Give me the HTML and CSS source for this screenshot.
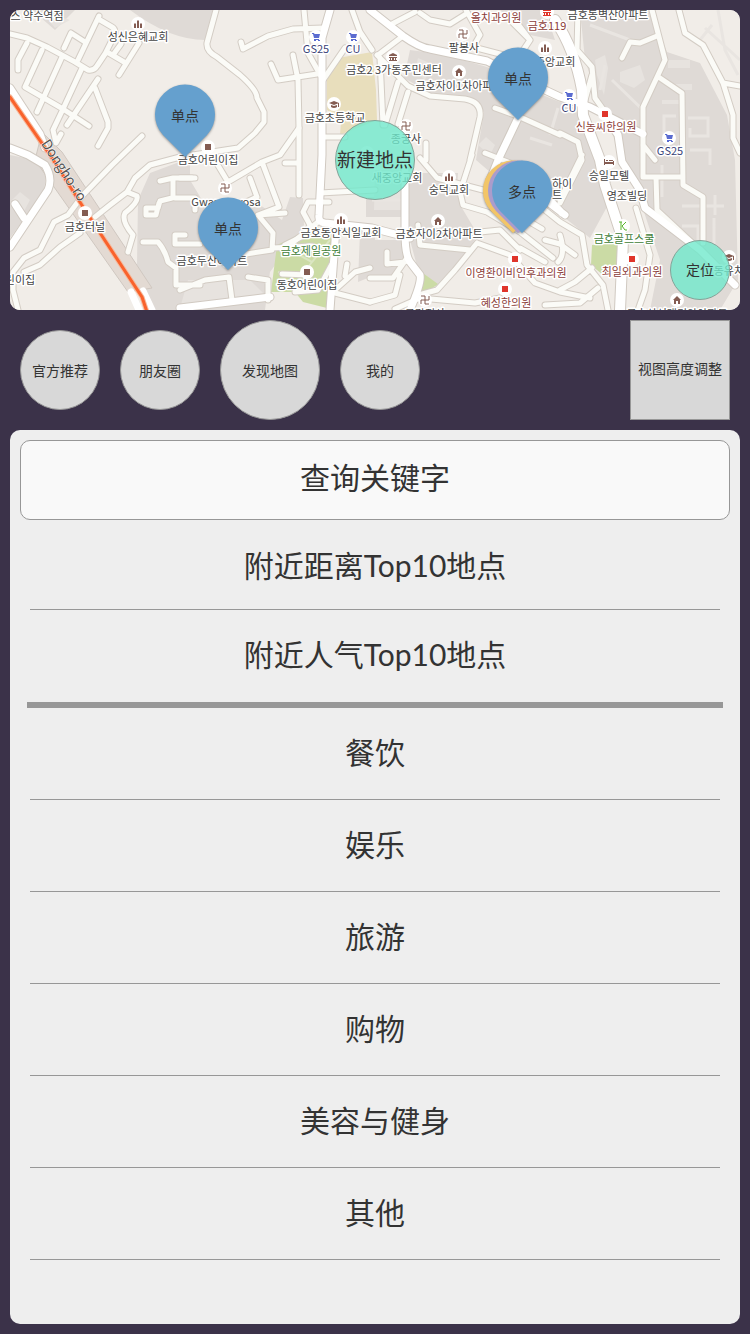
FILE: index.html
```html
<!DOCTYPE html>
<html lang="zh-CN">
<head>
<meta charset="utf-8">
<meta name="viewport" content="width=device-width, initial-scale=1">
<title>发现地图</title>
<link rel="stylesheet" href="styles.css">
</head>
<body>
<main class="app">
  <section class="map" aria-label="地图">
    <svg class="map-art" viewBox="10 10 730 300" preserveAspectRatio="xMidYMid slice">
      <defs>
        <g id="lanes">
          <path d="M10 34L27 38 47 47 75 62 88 70Q94 71 97 66L105 54 113 38Q117 30 112 27L100 20M99 16L78 60M85 42L71 33 64 48M27 43L18 60V70M42 50L25 87 63 109 89 126M62 57L37 112M82 68L63 109 53 130 56 143 61 134M98 79L67 125M95 88L108 122V128L98 146M107 52L124 62M139 43L119 75M121 44L113 55"/>
          <path d="M142 136L112 165 83 195 68 215 54 222 40 250 24 258 13 272V290L18 310M80 233L60 247 40 265 24 272M95 217L110 205 127 192 135 178 150 165 180 157 225 150 238 148 255 133 264 122V112L257 98Q257 90 240 75L217 57Q206 51 207 43L216 10M127 192L137 196Q139 202 125 213 121 221 133 235L128 252"/>
          <path d="M160 181L173 178H195M173 180V195M172 198L160 201 158 208H146V215L156 215 159 203M175 198H195V210M143 242H158Q165 250 168 262L176 268V285H200M175 235V244H200M185 235H175M180 290L205 280 229 277 232 300M248 277L268 280V300M216 162L228 182 240 175 262 162 280 155 299 128 298 80 293 55M271 64L278 80 317 74M304 10L308 53 322 78M241 42L243 49 268 36 293 29 323 28M345 48L323 80M352 10L360 32 372 50M322 137H345M262 162L279 207 258 215 273 233 272 250 240 255 220 252M258 215L285 213M287 247L318 222M273 248L312 246"/>
          <path d="M180 178H192M250 178L257 197 240 205M299 128V195M285 163H299M329 202H308L303 212 310 225 305 235 285 245M320 193L375 190M282 274L310 275M335 290L355 272 370 268M335 293L370 302M345 276L347 264M295 292L318 290 333 262"/>
          <path d="M403 36L378 55M390 25L415 12M420 13L430 20 450 24 466 14M377 55L408 86 430 96 465 99Q482 102 480 117L470 160M398 82L385 125M408 92L398 124M380 58L383 125M495 108L520 117 560 135M485 153L510 163M466 10L480 35 473 47 515 58M505 15L530 40 520 55M515 20L530 40M426 143L426 160M420 158L437 178 483 190M472 155L460 192 463 205 487 212 520 232 553 258M418 225L420 245 470 250M470 233L500 230 520 250M477 243L455 270 437 290 415 296M477 243L510 255 535 283 560 292 590 298M370 278H393L407 258M387 252V264L405 262M370 302L395 295 400 275M520 248L545 262M530 222L542 229M545 240L560 244 575 255"/>
          <path d="M578 10L577 50 592 67 595 98 605 112M592 75L585 100M652 10L665 60 643 107V177H683M656 177L657 210 700 250M660 78L682 93 683 185 703 197V243M657 36L640 43 630 42 622 58M643 145L655 160M679 10L685 33 703 45 723 83 733 115V138L740 153M723 83L740 86M636 208L650 255 645 290 638 310M582 155L560 200M545 210L560 222 582 235 587 265 603 285 608 310M560 290L575 282 592 268M545 305L580 303 598 288M560 133L578 142 582 160 560 203M560 235Q566 255 558 262M395 309L420 298 475 303 500 298"/>
        </g>
        <g id="streets">
          <path d="M10 148L28 155 45 165Q53 178 48 190L10 247M15 204L24 218M10 88L40 134 45 148M330 10L322 38V155L319 215Q318 222 325 223L372 228 410 238M336 228L330 310M370 10L403 36Q420 48 430 49L487 61 530 83 560 97 590 107 643 134M518 118L498 160 490 180M405 165V232Q405 255 410 262L420 275Q422 282 410 310M180 308L270 297M519 180L565 215M605 115L618 135 622 162 640 190 645 208 700 250 735 285M540 190L562 213"/>
        </g>
        <path id="avenue" d="M555 20Q575 50 582 90L583 115 600 160 605 185 623 240 620 310"/>
        <g id="church"><circle r="7"/><path class="brown" d="M-4 4V0L-3-1-2 0V4ZM-1 4V-3L0-4 1-3V4ZM2 4V0L3-1 4 0V4Z"/></g>
        <g id="place"><circle r="7"/><path class="brown" d="M-3-3H3V3H-3Z"/></g>
        <g id="clinic"><circle r="7"/><path class="red" d="M-3-3H3V3H-3Z"/></g>
        <g id="cart"><circle r="7"/><path class="blue" d="M-4-4H-2L-1.500-3H4L3 1H-2L-3-3H-4ZM-2 2H3V3H-2ZM-2 3H0V4H-2ZM2 3H4V4H2Z"/></g>
        <g id="house"><circle r="7"/><path class="brown" d="M0-4L4 0H3V4H1V1H-1V4H-3V0H-4Z"/></g>
        <g id="school"><circle r="7"/><path class="brown" d="M0-3L5-1 0 1-5-1ZM-3 1L0 2 3 1V3Q0 5-3 3ZM4-1H5V3H4Z"/></g>
        <g id="office"><circle r="7"/><path d="M0-4L4-2V-1H-4V-2ZM-4 0H4V1H3V3H4V4H-4V3H-3V1H-4ZM-2 1V3H-1V1ZM1 1V3H2V1Z" fill-rule="evenodd"/></g>
        <g id="bed"><circle r="7"/><path class="brown" d="M-5-3H-4V0H4V-1H5V3H4V2H-4V3H-5ZM-3-2H-1V-1H-3ZM0-2H4V-1H0Z"/></g>
        <g id="temple"><circle r="7"/><path class="mark" d="M-4-4H0V4H4M-4 4V0H4V-4"/></g>
        <g id="golf"><circle r="7"/><path class="golf" d="M-4-4H-1M-2-4V4M-1 0L3-4M-1 0L2 4H4"/></g>
      </defs>

      <rect class="land" x="-990" y="10" width="2730" height="300"/>
      <path class="block" d="M10 155L35 160 46 175 44 192 10 238ZM32 10H75L55 30ZM130 10H216L205 40Q170 40 130 10ZM190 158L150 173 138 200 137 265 153 310H265L270 272 290 245 304 225 303 198 290 197 282 220 260 205 205 205 190 180ZM410 50Q440 53 487 67L540 94 575 108 598 165 608 205 590 238 555 210 520 180 490 172 476 160 484 112 465 98 432 94 404 78ZM580 10H650L667 52 700 63 727 115 735 160 738 280 720 310H650L660 260 645 215 625 160 603 115 585 60ZM405 173H458L457 190 462 208 478 235 455 268 437 288 418 270 410 240 405 235ZM366 197H405V217H366ZM370 240L402 240 405 262 390 280 370 277ZM500 10L545 10 555 40 530 35ZM360 232H375V275L358 282Z"/>
      <path class="block-light" d="M188 280H250L270 300 180 308ZM12 200L20 192 30 200 22 215ZM620 72L640 65 645 80 634 88 620 82ZM595 60L605 55 608 68 604 95 597 75ZM668 60H690V68H668ZM676 84H692V90H676ZM662 104H680V100H662ZM375 170H401V210H374ZM418 58L432 64 425 80 415 70ZM486 137L495 145 490 155 478 145ZM40 10L70 20 55 28Z"/>
      <path class="yard" d="M664 140V116H676M688 118H708V136H690V128M690 150H710V165M662 165V197M715 195V215M682 206H724M714 218V245M682 226H698V240M612 80L645 112M605 65L600 90M590 25L630 40M530 138L552 145M558 108L550 135M372 200H402V175"/>
      <path class="yard" d="M700 40L712 25M705 28L740 60M718 10L725 50 738 75"/>
      <path class="school-yard" d="M338 58L372 52 376 90 377 120 340 135 341 122 327 110V80Z"/>
      <path class="park" d="M277 245L303 233 313 224 335 237 333 265 327 308 303 302 295 292 271 292ZM592 245L618 243 620 268 603 275 591 265ZM420 271L438 284 430 290 415 293Z"/>
      <path class="park-path" d="M278 272L300 278 312 262 330 240M300 278L315 284M290 250L312 262"/>
      <path class="tunnel" d="M35 160L128 292 152 288 62 152 42 132Z"/>
      <use href="#lanes" class="lane-edge"/>
      <use href="#streets" class="street-edge"/>
      <use href="#avenue" class="avenue-edge"/>
      <use href="#lanes" class="lane"/>
      <use href="#streets" class="street"/>
      <use href="#avenue" class="avenue"/>
      <path class="street" d="M131 292L139 310M143 291L152 310"/>
      <path class="highway-edge" d="M10 97L50 155 85 210 142 297 147 312"/>
      <path class="highway" d="M10 97L50 155 85 210 142 297 147 312"/>

      <g class="spots">
        <use href="#church" x="138" y="24"/><use href="#church" x="545" y="48"/><use href="#church" x="449" y="177"/><use href="#church" x="341" y="220"/>
        <use href="#place" x="208" y="147"/><use href="#place" x="85" y="213"/><use href="#place" x="307" y="272"/>
        <use href="#clinic" x="605" y="114"/><use href="#clinic" x="515" y="259"/><use href="#clinic" x="505" y="289"/><use href="#clinic" x="632" y="259"/>
        <use href="#cart" x="316" y="37"/><use href="#cart" x="353" y="37"/><use href="#cart" x="569" y="96"/><use href="#cart" x="669" y="138"/>
        <use href="#house" x="459" y="72"/><use href="#house" x="438" y="221"/><use href="#house" x="677" y="300"/>
        <use href="#school" x="334" y="104"/><use href="#school" x="729" y="257"/>
        <use href="#office" class="brown" x="393" y="57"/><use href="#office" class="red" x="547" y="12"/><use href="#bed" x="609" y="162"/><use href="#golf" x="623" y="226"/><use href="#church" x="367" y="153"/>
        <use href="#temple" x="463" y="34"/><use href="#temple" x="406" y="126"/><use href="#temple" x="225" y="188"/><use href="#temple" x="425" y="300"/>
      </g>
      <g class="labels">
        <text x="37" y="20">스 약수역점</text>
        <text x="138" y="41">성신은혜교회</text>
        <text x="394" y="74">금호2 3가동주민센터</text>
        <text x="335" y="122">금호초등학교</text>
        <text x="464" y="52">팔봉사</text>
        <text x="459" y="90">금호자이1차아파트</text>
        <text x="545" y="66">금호중앙교회</text>
        <text x="608" y="19">금호동벽산아파트</text>
        <text x="406" y="143">종궁사</text>
        <text x="397" y="182">새중앙교회</text>
        <text x="449" y="194">숭덕교회</text>
        <text x="208" y="164">금호어린이집</text>
        <text x="226" y="206">Gwangmyosa</text>
        <text x="85" y="231">금호터널</text>
        <text x="212" y="265">금호두산아파트</text>
        <text x="341" y="237">금호동안식일교회</text>
        <text x="307" y="289">동호어린이집</text>
        <text x="439" y="238">금호자이2차아파트</text>
        <text x="609" y="180">승일모텔</text>
        <text x="627" y="200">영조빌딩</text>
        <text x="562" y="188">하이</text>
        <text x="557" y="199">트</text>
        <text x="20" y="284">린이집</text>
        <text x="734" y="275">동유치원</text>
        <text x="425" y="318">금강정사</text>
        <text x="677" y="318">금호삼성래미안아파트</text>
        <text class="name-red" x="496" y="22">올치과의원</text>
        <text class="name-red" x="547" y="30">금호119</text>
        <text class="name-red" x="606" y="131">신농씨한의원</text>
        <text class="name-red" x="516" y="277">이영환이비인후과의원</text>
        <text class="name-red" x="506" y="307">혜성한의원</text>
        <text class="name-red" x="632" y="276">최일외과의원</text>
        <text class="name-green" x="311" y="255">금호제일공원</text>
        <text class="name-green" x="624" y="243">금호골프스쿨</text>
        <text class="name-blue" x="316" y="53">GS25</text>
        <text class="name-blue" x="353" y="53">CU</text>
        <text class="name-blue" x="569" y="112">CU</text>
        <text class="name-blue" x="670" y="155">GS25</text>
        <text class="name-road" transform="translate(60 173) rotate(57)">Dongho-ro</text>
      </g>
    </svg>

    <button class="pin pin-a" type="button"><svg class="pin-shape" viewBox="0 0 72 76"><path class="pin-blue" d="M36 74L14 52A30 30 0 1 1 58 52Z"/></svg><span class="pin-text">单点</span></button>
    <button class="pin pin-b" type="button"><svg class="pin-shape" viewBox="0 0 72 76"><path class="pin-blue" d="M36 74L14 52A30 30 0 1 1 58 52Z"/></svg><span class="pin-text">单点</span></button>
    <button class="pin pin-c" type="button"><svg class="pin-shape" viewBox="0 0 72 76"><path class="pin-blue" d="M36 74L14 52A30 30 0 1 1 58 52Z"/></svg><span class="pin-text">单点</span></button>
    <button class="pin pin-d" type="button"><svg class="pin-shape" viewBox="0 0 72 76"><path class="pin-gold" d="M27 74L5 52A30 30 0 1 1 49 52Z"/><path class="pin-violet" d="M32 74L10 52A30 30 0 1 1 54 52Z"/><path class="pin-blue" d="M36 74L14 52A30 30 0 1 1 58 52Z"/></svg><span class="pin-text">多点</span></button>
    <button class="bubble new-place" type="button">新建地点</button>
    <button class="bubble locate" type="button">定位</button>
  </section>

  <nav class="tabs">
    <button class="tab" type="button">官方推荐</button>
    <button class="tab" type="button">朋友圈</button>
    <button class="tab tab-current" type="button" aria-current="page">发现地图</button>
    <button class="tab" type="button">我的</button>
    <button class="resize" type="button">视图高度调整</button>
  </nav>

  <section class="panel">
    <input class="search" type="text" placeholder="查询关键字" aria-label="查询关键字">
    <ul class="list">
      <li class="item item-first"><button class="link" type="button">附近距离Top10地点</button></li>
      <li class="item item-split"><button class="link" type="button">附近人气Top10地点</button></li>
      <li class="item"><button class="link" type="button">餐饮</button></li>
      <li class="item"><button class="link" type="button">娱乐</button></li>
      <li class="item"><button class="link" type="button">旅游</button></li>
      <li class="item"><button class="link" type="button">购物</button></li>
      <li class="item"><button class="link" type="button">美容与健身</button></li>
      <li class="item"><button class="link" type="button">其他</button></li>
    </ul>
  </section>
</main>
</body>
</html>
```
FILE: styles.css
```css
* { box-sizing: border-box; }

body {
  margin: 0;
  background: #3b3249;
  color: #333;
  font-family: Lato, "Noto Sans CJK SC", sans-serif;
}

button, input { font: inherit; color: inherit; }
button { padding: 0; cursor: pointer; }

.app {
  display: flex;
  flex-direction: column;
  min-height: 100vh;
  padding: 10px;
}

/* Map */
.map {
  position: relative;
  height: 300px;
  overflow: hidden;
  border-radius: 10px;
  background: #f1ede8;
}
.map-art { display: block; width: 100%; height: 100%; }

.land { fill: #f1ede8; }
.block { fill: #dfdad6; }
.block-light { fill: #e7e3df; }
.yard { fill: none; stroke: #e9e5e1; stroke-width: 3; }
.school-yard { fill: #e8debc; }
.park { fill: #cbdba5; }
.park-path { fill: none; stroke: #dbe6c2; stroke-width: 2; }
.tunnel { fill: #e3dad3; stroke: #cfc7c0; }

.lane, .lane-edge, .street, .street-edge, .avenue, .avenue-edge, .highway, .highway-edge {
  fill: none;
  stroke-linecap: round;
  stroke-linejoin: round;
}
.lane-edge { stroke: #d3ccc4; stroke-width: 7; }
.lane { stroke: #fbfbf7; stroke-width: 5; }
.street-edge { stroke: #d0c9c1; stroke-width: 9; }
.street { stroke: #fff; stroke-width: 7; }
.avenue-edge { stroke: #d0c9c1; stroke-width: 12; }
.avenue { stroke: #fff; stroke-width: 10; }
.highway-edge { stroke: #f6b99b; stroke-width: 5; }
.highway { stroke: #f9622c; stroke-width: 3; }

.spots { fill: #fff; }
#office circle { fill: #fff; }
.brown { fill: #845c52; }
.red { fill: #e0352b; }
.blue { fill: #5a6bd0; }
.mark { fill: none; stroke: #845c52; }
.golf { fill: none; stroke: #59b52c; stroke-width: 1; }

.labels {
  fill: #444;
  stroke: #fff;
  stroke-width: 3px;
  stroke-linejoin: round;
  paint-order: stroke;
  font-family: "Noto Sans CJK KR", sans-serif;
  font-size: 11px;
  text-anchor: middle;
}
.name-red { fill: #8c3d39; }
.name-green { fill: #3f8038; }
.name-blue { fill: #3a4378; }
.name-road { fill: #555; font-size: 14px; stroke-width: 1px; }

/* Markers over the map */
.pin {
  position: absolute;
  width: 72px;
  height: 76px;
  border: 0;
  background: none;
  transform: translateX(-50%);
  font-size: 14px;
}
.pin-shape {
  position: absolute;
  inset: 0;
  width: 100%;
  height: 100%;
  overflow: visible;
  filter: drop-shadow(0 1px 1px rgba(60, 60, 60, .5));
}
.pin-text {
  position: absolute;
  inset: 0;
  line-height: 66px;
}
.pin-blue { fill: #65a0ce; }
.pin-gold { fill: #f2c568; }
.pin-violet { fill: #ab9ccb; }
.pin-a { left: calc(50% - 190px); top: 73px; }
.pin-b { left: calc(50% - 147px); top: 186px; }
.pin-c { left: calc(50% + 143px); top: 36px; }
.pin-d { left: calc(50% + 147px); top: 149px; }

.bubble {
  position: absolute;
  border: 1px solid #83a398;
  border-radius: 50%;
  background: rgba(112, 233, 204, .8);
}
.new-place {
  left: calc(50% - 40px);
  top: 110px;
  width: 80px;
  height: 80px;
  padding-bottom: 4px;
  font-size: 19px;
  white-space: nowrap;
}
.locate {
  right: 10px;
  bottom: 10px;
  width: 60px;
  height: 60px;
  padding-bottom: 2px;
  font-size: 14px;
}

/* Round tabs */
.tabs {
  display: flex;
  align-items: center;
  gap: 20px;
  padding: 10px;
}
.tab, .resize {
  flex: none;
  border: 1px solid #979797;
  background: #d8d8d8;
  font-size: 14px;
  white-space: nowrap;
}
.tab { width: 80px; height: 80px; border-radius: 50%; }
.tab-current { width: 100px; height: 100px; }
.resize { width: 100px; height: 100px; margin-left: auto; padding-bottom: 4px; }

/* Place list */
.panel {
  flex: 1;
  padding: 10px;
  border-radius: 10px;
  background: #eee;
}
.search {
  display: block;
  width: 100%;
  height: 80px;
  padding: 0 20px 6px;
  border: 1px solid #979797;
  border-radius: 10px;
  background: #f9f9f9;
  font-size: 30px;
  text-align: center;
}
.search::placeholder { color: #333; opacity: 1; }
.list { margin: 0; padding: 0 10px; list-style: none; }
.item { height: 92px; border-bottom: 1px solid #979797; }
.item-first { height: 90px; }
.item-split {
  height: 98px;
  margin: 0 -3px;
  border-bottom-width: 6px;
}
.link {
  display: block;
  width: 100%;
  height: 100%;
  padding-bottom: 6px;
  border: 0;
  background: none;
  font-size: 30px;
}
.item-first .link { padding-bottom: 2px; }
```
